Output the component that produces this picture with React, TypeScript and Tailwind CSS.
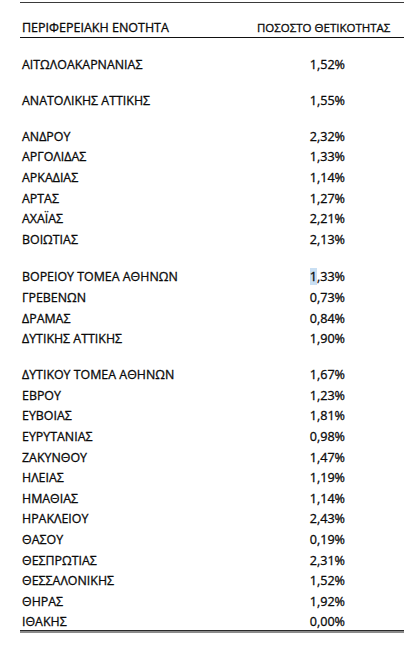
import React from "react";

type Row = { n: string; v: string; hl?: boolean } | { gap: number };

const rows: Row[] = [
  { n: "ΑΙΤΩΛΟΑΚΑΡΝΑΝΙΑΣ", v: "1,52%" },
  { gap: 15.4 },
  { n: "ΑΝΑΤΟΛΙΚΗΣ ΑΤΤΙΚΗΣ", v: "1,55%" },
  { gap: 15 },
  { n: "ΑΝΔΡΟΥ", v: "2,32%" },
  { n: "ΑΡΓΟΛΙΔΑΣ", v: "1,33%" },
  { n: "ΑΡΚΑΔΙΑΣ", v: "1,14%" },
  { n: "ΑΡΤΑΣ", v: "1,27%" },
  { n: "ΑΧΑΪΑΣ", v: "2,21%" },
  { n: "ΒΟΙΩΤΙΑΣ", v: "2,13%" },
  { gap: 16.9 },
  { n: "ΒΟΡΕΙΟΥ ΤΟΜΕΑ ΑΘΗΝΩΝ", v: "1,33%", hl: true },
  { n: "ΓΡΕΒΕΝΩΝ", v: "0,73%" },
  { n: "ΔΡΑΜΑΣ", v: "0,84%" },
  { n: "ΔΥΤΙΚΗΣ ΑΤΤΙΚΗΣ", v: "1,90%" },
  { gap: 15.6 },
  { n: "ΔΥΤΙΚΟΥ ΤΟΜΕΑ ΑΘΗΝΩΝ", v: "1,67%" },
  { n: "ΕΒΡΟΥ", v: "1,23%" },
  { n: "ΕΥΒΟΙΑΣ", v: "1,81%" },
  { n: "ΕΥΡΥΤΑΝΙΑΣ", v: "0,98%" },
  { n: "ΖΑΚΥΝΘΟΥ", v: "1,47%" },
  { n: "ΗΛΕΙΑΣ", v: "1,19%" },
  { n: "ΗΜΑΘΙΑΣ", v: "1,14%" },
  { n: "ΗΡΑΚΛΕΙΟΥ", v: "2,43%" },
  { n: "ΘΑΣΟΥ", v: "0,19%" },
  { n: "ΘΕΣΠΡΩΤΙΑΣ", v: "2,31%" },
  { n: "ΘΕΣΣΑΛΟΝΙΚΗΣ", v: "1,52%" },
  { n: "ΘΗΡΑΣ", v: "1,92%" },
  { n: "ΙΘΑΚΗΣ", v: "0,00%" },
];

export default function App() {
  return (
    <div
      className="w-[404px] h-[657px] bg-white text-[#0a0a0a] [-webkit-text-stroke:0.3px_#0a0a0a] overflow-hidden"
      style={{ fontFamily: '"Open Sans", "Noto Sans", sans-serif' }}
    >
      <div className="pl-[20px] pt-[2px]">
        <div className="border-t border-[#3a3a3a]" />
        <div className="flex items-end h-[35px] border-b border-[#111] leading-[14px] pb-[2px]">
          <div className="pl-[2px] w-[237px] text-[12.5px]">ΠΕΡΙΦΕΡΕΙΑΚΗ ΕΝΟΤΗΤΑ</div>
          <div className="text-[11.5px]">ΠΟΣΟΣΤΟ ΘΕΤΙΚΟΤΗΤΑΣ</div>
        </div>
        <div className="h-[17px]" />
        <div className="flex flex-col">
          {rows.map((r, i) =>
            "gap" in r ? (
              <div key={i} style={{ height: r.gap }} />
            ) : (
              <div key={i} className="flex items-center h-[20.6px] leading-[14px]">
                <div className="pl-[2px] w-[288px] text-[12.4px]">{r.n}</div>
                <div className="w-[37px] text-right text-[12.6px]">
                  {r.hl ? (
                    <>
                      <span className="bg-[#c9dff3]">1</span>,33%
                    </>
                  ) : (
                    r.v
                  )}
                </div>
              </div>
            )
          )}
        </div>
        <div className="border-t border-[#2a2a2a] mt-[-3px]" />
        <div className="border-t-2 border-[#8a8a8a]" />
      </div>
    </div>
  );
}
